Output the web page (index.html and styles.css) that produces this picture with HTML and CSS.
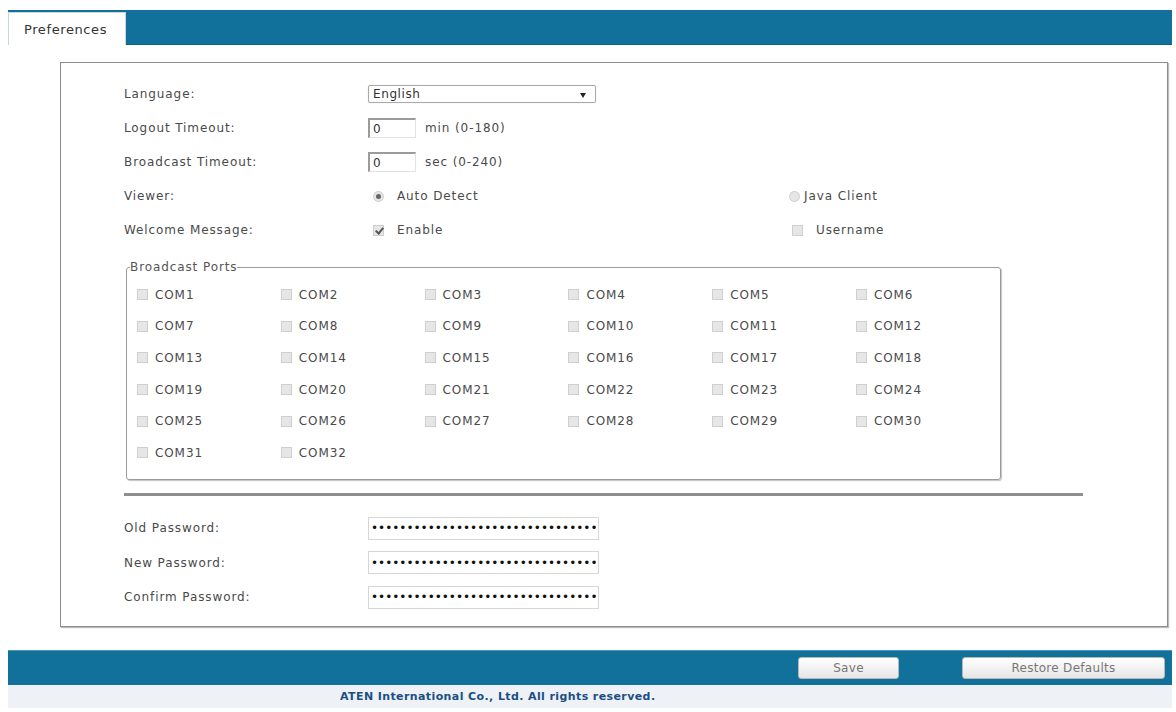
FILE: index.html
```html
<!DOCTYPE html>
<html>
<head>
    <title>Preferences</title>
    <meta charset="utf-8" />
    <link rel="stylesheet" href="styles.css">
</head>
<body>
    <div class="page">
        <div class="tab-bar">
            <div class="tab">Preferences</div>
        </div>

        <div class="panel">
            <div class="form-grid">
                <label class="form-label">Language:</label>
                <div class="form-field">
                    <span class="select-wrap">
                        <select class="select-lang">
                            <option>English</option>
                        </select>
                    </span>
                </div>
                <div></div>

                <label class="form-label">Logout Timeout:</label>
                <div class="form-field">
                    <input type="text" class="input-small" value="0" />
                    <span class="unit">min (0-180)</span>
                </div>
                <div></div>

                <label class="form-label">Broadcast Timeout:</label>
                <div class="form-field">
                    <input type="text" class="input-small" value="0" />
                    <span class="unit">sec (0-240)</span>
                </div>
                <div></div>

                <label class="form-label">Viewer:</label>
                <div class="form-field">
                    <input type="radio" name="viewer" class="radio" checked />
                    <span class="option-text">Auto Detect</span>
                </div>
                <div class="form-field">
                    <input type="radio" name="viewer" class="radio" />
                    <span class="option-text option-tight">Java Client</span>
                </div>

                <label class="form-label">Welcome Message:</label>
                <div class="form-field">
                    <input type="checkbox" class="check" checked />
                    <span class="option-text">Enable</span>
                </div>
                <div class="form-field">
                    <input type="checkbox" class="check check-right" />
                    <span class="option-text">Username</span>
                </div>
            </div>

            <fieldset class="ports">
                <legend>Broadcast Ports</legend>
                <div class="ports-grid" id="portsGrid"></div>
            </fieldset>

            <hr class="divider" />

            <div class="form-grid password-grid">
                <label class="form-label">Old Password:</label>
                <div class="form-field"><input type="password" class="input-pass" value="****************************************" /></div>
                <label class="form-label">New Password:</label>
                <div class="form-field"><input type="password" class="input-pass" value="****************************************" /></div>
                <label class="form-label">Confirm Password:</label>
                <div class="form-field"><input type="password" class="input-pass" value="****************************************" /></div>
            </div>
        </div>

        <div class="action-bar">
            <button class="btn btn-save">Save</button>
            <button class="btn btn-restore">Restore Defaults</button>
        </div>
        <div class="footer">ATEN International Co., Ltd. All rights reserved.</div>
    </div>

    <script>
        (function (document) {
            var grid = document.getElementById('portsGrid');
            for (var i = 1; i <= 32; i++) {
                var item = document.createElement('label');
                item.className = 'port-item';
                item.innerHTML = '<input type="checkbox" class="check" /><span>COM' + i + '</span>';
                grid.appendChild(item);
            }
        })(document);
    </script>
</body>
</html>
```

FILE: styles.css
```css
body{
    margin:0;
    background:#fff;
    font-family:"DejaVu Sans", Verdana, sans-serif;
    font-size:12px;
    letter-spacing:0.9px;
    color:#4a4a4a;
}
.page{
    padding:10px 4px 4px 8px;
}
.tab-bar{
    height:35px;
    background:#11719a;
    border-bottom:1px solid #0d5f82;
    box-sizing:border-box;
    padding-top:2px;
}
.tab{
    width:118px;
    height:33px;
    box-sizing:border-box;
    background:#fff;
    border:1px solid #c9d6de;
    border-bottom:none;
    color:#333;
    font-size:13px;
    letter-spacing:0.6px;
    padding:9px 0 0 15px;
}
.panel{
    margin:17px 4px 0 52px;
    height:565px;
    box-sizing:border-box;
    border:1px solid #8c8c8c;
    box-shadow:1px 1px 1px #bdbdbd;
    padding:14px 0 0 63px;
}
.form-grid{
    display:grid;
    grid-template-columns:244px 416px auto;
    grid-auto-rows:34px;
    align-items:center;
}
.form-field{
    display:flex;
    align-items:center;
}
.select-wrap{
    position:relative;
    display:inline-block;
}
.select-wrap:after{
    content:"";
    position:absolute;
    right:10px;
    top:7px;
    border-left:3px solid transparent;
    border-right:3px solid transparent;
    border-top:5px solid #222;
}
.select-lang{
    -webkit-appearance:none;
    appearance:none;
    width:228px;
    height:18px;
    border:1px solid #a9a9a9;
    border-radius:2px;
    box-shadow:0 0 1px #ccc;
    background:#fff;
    font-family:inherit;
    font-size:12px;
    letter-spacing:0.6px;
    color:#333;
    padding:0 4px;
    margin:-1px 0 0 0;
}
.input-small{
    width:48px;
    height:20px;
    box-sizing:border-box;
    margin:0;
    border:1px solid #e2e2e2;
    border-top:2px solid #9b9b9b;
    border-left:2px solid #9b9b9b;
    font-family:inherit;
    font-size:12px;
    color:#333;
    padding:0 3px;
}
.unit{
    margin-left:9px;
}
.radio,
.check{
    -webkit-appearance:none;
    appearance:none;
    width:11px;
    height:11px;
    margin:0;
    box-sizing:border-box;
    border:1px solid #cfcfcf;
    background:#e6e6e6;
    position:relative;
}
.radio{
    border-radius:50%;
    margin-left:5px;
}
.radio:checked:after{
    content:"";
    position:absolute;
    left:2px;
    top:2px;
    width:5px;
    height:5px;
    border-radius:50%;
    background:#666;
}
.check:checked:after{
    content:"";
    position:absolute;
    left:3px;
    top:0;
    width:3px;
    height:6px;
    border:solid #555;
    border-width:0 2px 2px 0;
    transform:rotate(40deg);
}
.form-field .check{
    margin-left:5px;
}
.form-field .check-right{
    margin-left:8px;
}
.option-text{
    margin-left:13px;
}
.option-tight{
    margin-left:4px;
}
.ports{
    margin:13px 0 0 2px;
    width:868px;
    height:220px;
    box-sizing:border-box;
    border:1px solid #9a9a9a;
    border-radius:3px;
    box-shadow:1px 1px 1px #c4c4c4;
    padding:5px 0 0 10px;
}
.ports legend{
    padding:0;
    margin-left:-7px;
    font-size:12px;
    color:#555;
}
.ports-grid{
    display:grid;
    grid-template-columns:repeat(6, 143.8px);
    grid-auto-rows:31.6px;
    align-items:center;
}
.port-item{
    display:flex;
    align-items:center;
}
.port-item span{
    margin-left:7px;
}
.divider{
    margin:13px 0 0 0;
    width:959px;
    height:0;
    border:none;
    border-top:3px solid #8e8e8e;
}
.password-grid{
    grid-template-columns:244px auto;
    grid-auto-rows:34.5px;
    margin-top:15px;
}
.input-pass{
    width:231px;
    height:23px;
    box-sizing:border-box;
    margin:0;
    border:1px solid #d6d6d6;
    font-family:"DejaVu Sans", sans-serif;
    font-size:12px;
    letter-spacing:0;
    color:#111;
    padding:0 2px;
}
.action-bar{
    margin-top:23px;
    height:35px;
    background:#11719a;
    display:flex;
    align-items:center;
    justify-content:flex-end;
    gap:63px;
    padding-right:7px;
    border-top:1px solid #3f9cc0;
    box-sizing:border-box;
}
.btn{
    height:22px;
    border:1px solid #b7b7b7;
    border-radius:3px;
    background:linear-gradient(#ffffff, #e6e6e6);
    color:#777;
    font-family:inherit;
    font-size:12px;
    letter-spacing:0.3px;
    padding:0;
}
.btn-save{
    width:101px;
}
.btn-restore{
    width:203px;
}
.footer{
    height:23px;
    background:#eef2f7;
    color:#1b4f83;
    font-size:11px;
    letter-spacing:0.4px;
    font-weight:bold;
    line-height:24px;
    padding-left:332px;
}
```
